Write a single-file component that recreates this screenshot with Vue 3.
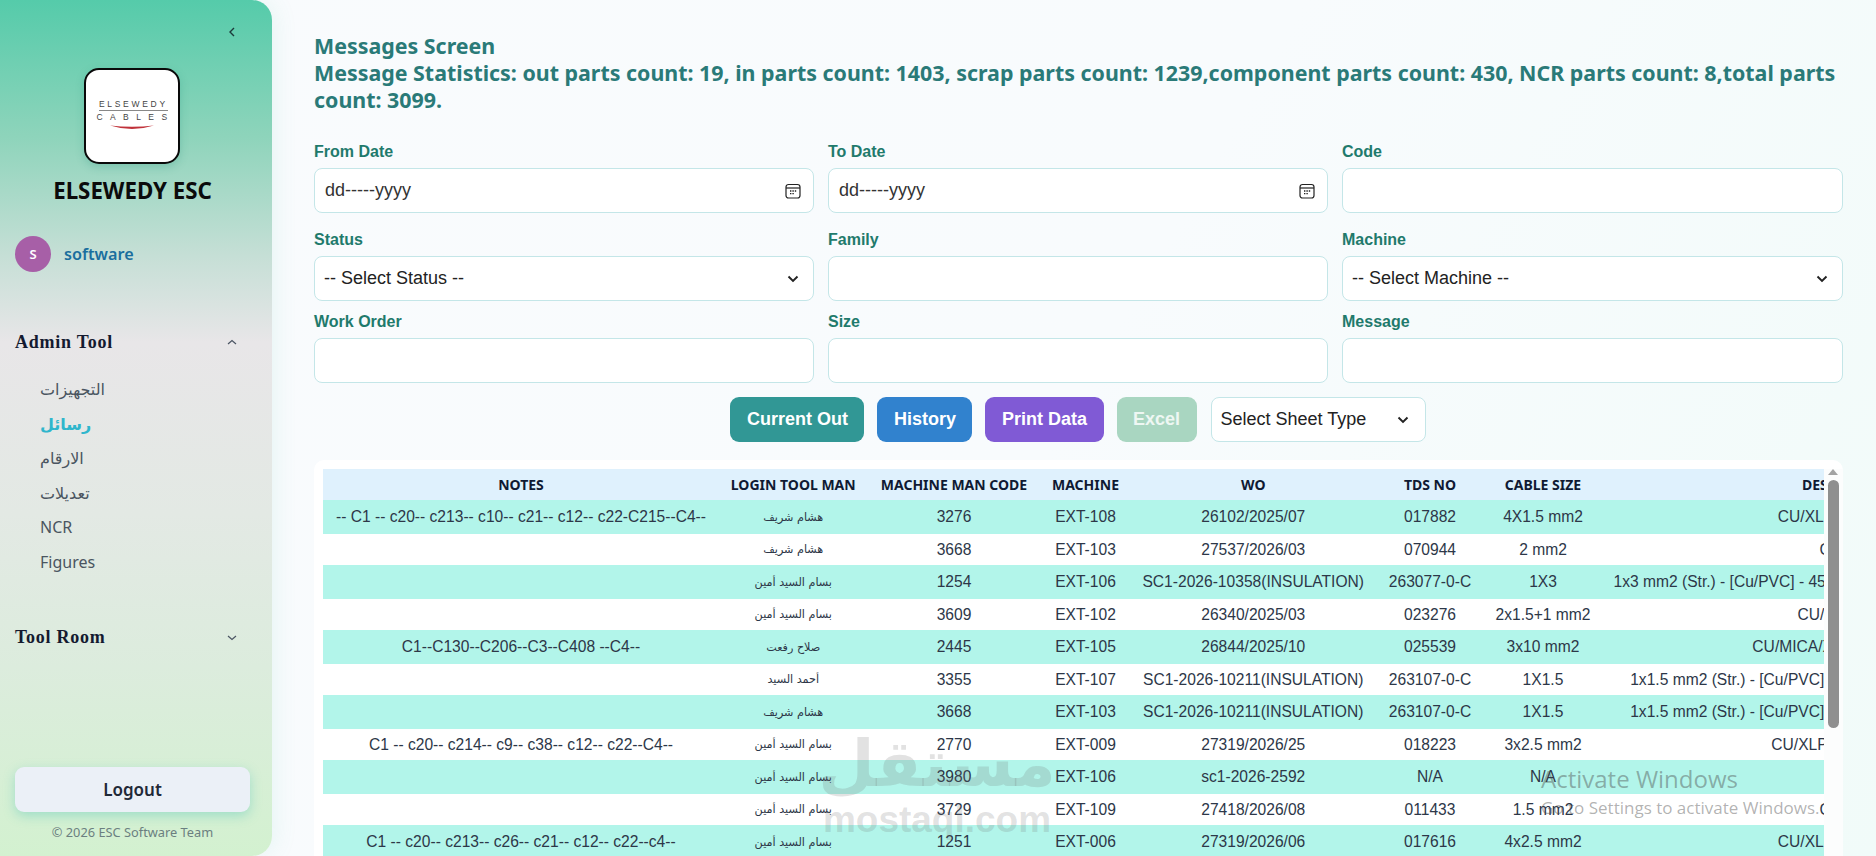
<script setup>
const firstRow = [
  { label: 'From Date', type: 'date' },
  { label: 'To Date', type: 'date' },
  { label: 'Code', type: 'text' },
]
const otherRows = [
  { label: 'Status', type: 'select', value: '-- Select Status --' },
  { label: 'Family', type: 'text' },
  { label: 'Machine', type: 'select', value: '-- Select Machine --' },
  { label: 'Work Order', type: 'text' },
  { label: 'Size', type: 'text' },
  { label: 'Message', type: 'text' },
]
const menu = ['التجهيزات', 'رسائل', 'الارقام', 'تعديلات', 'NCR', 'Figures']
const heads = ['Notes', 'Login Tool Man', 'Machine Man Code', 'Machine', 'WO', 'TDS No', 'Cable Size', 'Description']
const rows = [
  ['-- C1 -- c20-- c213-- c10-- c21-- c12-- c22-C215--C4--', 'هشام شريف', '3276', 'EXT-108', '26102/2025/07', '017882', '4X1.5 mm2', 'CU/XLPE/SWA/PVC'],
  ['', 'هشام شريف', '3668', 'EXT-103', '27537/2026/03', '070944', '2 mm2', 'CU/PVC'],
  ['', 'بسام السيد أمين', '1254', 'EXT-106', 'SC1-2026-10358(INSULATION)', '263077-0-C', '1X3', '1x3 mm2 (Str.) - [Cu/PVC] - 450/750 V - H07V-R - Building Wire - Red'],
  ['', 'بسام السيد أمين', '3609', 'EXT-102', '26340/2025/03', '023276', '2x1.5+1 mm2', 'CU/XLPE/PVC'],
  ['C1--C130--C206--C3--C408 --C4--', 'صلاح رفعت', '2445', 'EXT-105', '26844/2025/10', '025539', '3x10 mm2', 'CU/MICA/XLPE/LSZH 0.6/1'],
  ['', 'أحمد السيد', '3355', 'EXT-107', 'SC1-2026-10211(INSULATION)', '263107-0-C', '1X1.5', '1x1.5 mm2 (Str.) - [Cu/PVC] - 450/750 V - H07V-R - Panel Wire'],
  ['', 'هشام شريف', '3668', 'EXT-103', 'SC1-2026-10211(INSULATION)', '263107-0-C', '1X1.5', '1x1.5 mm2 (Str.) - [Cu/PVC] - 450/750 V - H07V-R - Panel Wire'],
  ['C1 -- c20-- c214-- c9-- c38-- c12-- c22--C4--', 'بسام السيد أمين', '2770', 'EXT-009', '27319/2026/25', '018223', '3x2.5 mm2', 'CU/XLPE/SWA/PVC 1'],
  ['', 'بسام السيد أمين', '3980', 'EXT-106', 'sc1-2026-2592', 'N/A', 'N/A', ''],
  ['', 'بسام السيد أمين', '3729', 'EXT-109', '27418/2026/08', '011433', '1.5 mm2', 'CU/PVC'],
  ['C1 -- c20-- c213-- c26-- c21-- c12-- c22--c4--', 'بسام السيد أمين', '1251', 'EXT-006', '27319/2026/06', '017616', '4x2.5 mm2', 'CU/XLPE/SWA/PVC'],
]
const widths = [396, 148.5, 173, 90, 245.5, 108, 118, 494]
</script>

<template>
  <div class="app">
    <aside class="sidebar">
      <div class="collapse-row">
        <svg width="10" height="12" viewBox="0 0 10 12"><path d="M7 2 L3 6 L7 10" fill="none" stroke="#1c3a3a" stroke-width="1.4" /></svg>
      </div>
      <div class="logo">
        <span class="logo-top">ELSEWEDY</span>
        <span class="logo-bottom">CABLES</span>
        <svg class="smile" width="44" height="6" viewBox="0 0 44 6"><path d="M0 0.5 Q22 3 44 0.5 Q22 7.5 0 0.5 Z" fill="#c0323a" /></svg>
      </div>
      <div class="brand">ELSEWEDY ESC</div>
      <div class="user">
        <span class="avatar">S</span>
        <span class="username">software</span>
      </div>
      <div class="group admin">
        <span>Admin Tool</span>
        <svg width="12" height="8" viewBox="0 0 12 8"><path d="M2 6 L6 2.5 L10 6" fill="none" stroke="#4b5563" stroke-width="1.2" /></svg>
      </div>
      <ul class="menu">
        <li v-for="(item, i) in menu" :key="item" :class="{ active: i === 1 }">{{ item }}</li>
      </ul>
      <div class="group room">
        <span>Tool Room</span>
        <svg width="12" height="8" viewBox="0 0 12 8"><path d="M2 2 L6 5.5 L10 2" fill="none" stroke="#4b5563" stroke-width="1.2" /></svg>
      </div>
      <button class="logout">Logout</button>
      <div class="copy">© 2026 ESC Software Team</div>
    </aside>

    <main class="main">
      <h1 class="title">
        Messages Screen<br />
        Message Statistics: out parts count: 19, in parts count: 1403, scrap parts count: 1239,component parts count: 430, NCR parts count: 8,total parts count: 3099.
      </h1>

      <section class="form first">
        <div v-for="f in firstRow" :key="f.label" class="field">
          <label>{{ f.label }}</label>
          <div class="control">
            <template v-if="f.type === 'date'">
              <span class="date-text">dd-----yyyy</span>
              <svg width="16" height="16" viewBox="0 0 16 16">
                <rect x="1" y="1.5" width="14" height="13.5" rx="2.5" fill="none" stroke="#222" stroke-width="1.2" />
                <path d="M1 5 H15" stroke="#222" stroke-width="1.2" />
                <path d="M5 8 H6.4 M7.4 8 H8.8 M9.8 8 H11.2 M5 10.6 H6.4 M7.4 10.6 H8.8" stroke="#222" stroke-width="1.3" />
              </svg>
            </template>
          </div>
        </div>
      </section>
      <section class="form">
        <div v-for="f in otherRows" :key="f.label" class="field">
          <label>{{ f.label }}</label>
          <div class="control">
            <template v-if="f.type === 'select'">
              <span class="select-text">{{ f.value }}</span>
              <svg class="chev" width="12" height="8" viewBox="0 0 12 8"><path d="M1.5 1.5 L6 6 L10.5 1.5" fill="none" stroke="#222" stroke-width="1.9" /></svg>
            </template>
          </div>
        </div>
      </section>

      <div class="actions">
        <button class="btn teal">Current Out</button>
        <button class="btn blue">History</button>
        <button class="btn purple">Print Data</button>
        <button class="btn excel">Excel</button>
        <div class="sheet">
          <span>Select Sheet Type</span>
          <svg width="12" height="8" viewBox="0 0 12 8"><path d="M1.5 1.5 L6 6 L10.5 1.5" fill="none" stroke="#222" stroke-width="1.9" /></svg>
        </div>
      </div>

      <section class="card">
        <div class="table-wrap">
          <table>
            <colgroup>
              <col v-for="(w, i) in widths" :key="i" :style="{ width: w + 'px' }" />
            </colgroup>
            <thead>
              <tr><th v-for="h in heads" :key="h">{{ h }}</th></tr>
            </thead>
            <tbody>
              <tr v-for="(r, i) in rows" :key="i">
                <td v-for="(c, j) in r" :key="j" :class="{ ar: j === 1 }">{{ c }}</td>
              </tr>
            </tbody>
          </table>
        </div>
        <div class="scrollbar">
          <svg width="12" height="8" viewBox="0 0 12 8"><path d="M6 1 L11 7 H1 Z" fill="#a3a3a3" /></svg>
          <div class="thumb"></div>
        </div>
      </section>
    </main>

    <div class="wm-mostaql">
      <span class="wm-ar">مستقل</span>
      <span class="wm-en">mostaql.com</span>
    </div>
    <div class="wm-windows">
      <div class="wm-win-1">Activate Windows</div>
      <div class="wm-win-2">Go to Settings to activate Windows.</div>
    </div>
  </div>
</template>

<style>
html, body { margin: 0; overflow: hidden; }
</style>

<style scoped>
.app {
  position: relative;
  display: flex;
  width: 1876px;
  height: 856px;
  overflow: hidden;
  background: linear-gradient(120deg, #f9fbfd 0%, #f8fbfd 55%, #f1fbf9 100%);
  font-family: "Liberation Sans", Arial, sans-serif;
}
.sidebar {
  flex: 0 0 272px;
  box-sizing: border-box;
  height: 856px;
  display: flex;
  flex-direction: column;
  padding: 22px 22px 15px 15px;
  border-radius: 0 20px 20px 0;
  background: linear-gradient(180deg, #55cbaa 0%, #8ed4bb 16%, #c6dfd6 30%, #e8e6e8 40%, #e3e9e4 60%, #dcecdd 78%, #d3f1d0 100%);
  box-shadow: 4px 0 22px rgba(80, 200, 170, .1);
  font-family: "Noto Sans", "DejaVu Sans", sans-serif;
}
.collapse-row {
  display: flex;
  justify-content: flex-end;
  align-items: center;
  height: 20px;
  padding-right: 13px;
}
.logo {
  box-sizing: border-box;
  width: 96px;
  height: 96px;
  margin: 26px 0 0 69px;
  border: 2px solid #0a0a0a;
  border-radius: 15px;
  background: #fff;
  display: flex;
  flex-direction: column;
  align-items: center;
  justify-content: center;
  box-shadow: 0 3px 8px rgba(30, 140, 120, .25);
  padding-bottom: 3px;
  color: #444;
  font-family: "Liberation Sans", sans-serif;
  font-size: 8.5px;
  line-height: 11px;
}
.logo-top {
  letter-spacing: 2.7px;
  margin-right: -2.7px;
  border-bottom: 1px solid #888;
  margin-bottom: 1px;
}
.logo-bottom { letter-spacing: 7.4px; margin-right: -7px; }
.smile { margin-top: 2px; }
.brand {
  margin-top: 13px;
  height: 28px;
  line-height: 28px;
  text-align: center;
  font-size: 22.3px;
  font-weight: 700;
  color: #0b0b0b;
}
.user {
  display: flex;
  align-items: center;
  margin-top: 31px;
  height: 36px;
}
.avatar {
  width: 36px;
  height: 36px;
  border-radius: 50%;
  background: #a75fa7;
  color: #fff;
  display: flex;
  align-items: center;
  justify-content: center;
  font-size: 13px;
  font-weight: 600;
}
.username {
  margin-left: 13px;
  font-size: 16.2px;
  font-weight: 600;
  color: #1a6e9e;
}
.group {
  display: flex;
  align-items: center;
  justify-content: space-between;
  height: 24px;
  padding-right: 12px;
  font-family: "Liberation Serif", serif;
  font-weight: 700;
  font-size: 18px;
  letter-spacing: .75px;
  color: #141a30;
}
.admin { margin-top: 58px; }
.room { margin-top: 46px; }
.menu {
  list-style: none;
  margin: 18px 0 0;
  padding: 0 0 0 25px;
}
.menu li {
  height: 34.6px;
  line-height: 34.6px;
  font-size: 16px;
  color: #4a5560;
  font-family: "Noto Sans", "DejaVu Sans", sans-serif;
}
.menu li.active { color: #2fb6cc; font-weight: 700; }
.logout {
  margin-top: auto;
  height: 45px;
  border: 0;
  border-radius: 9px;
  background: #ebf0f7;
  box-shadow: 0 4px 12px rgba(60, 190, 180, .35);
  font-family: "Noto Sans", sans-serif;
  font-size: 17px;
  font-weight: 600;
  color: #1f2937;
}
.copy {
  margin-top: 11px;
  height: 18px;
  line-height: 18px;
  text-align: center;
  font-size: 12.8px;
  color: #6b7f80;
}
.main {
  flex: 1;
  min-width: 0;
  box-sizing: border-box;
  padding: 32px 33px 0 42px;
}
.title {
  margin: 0 0 31px;
  font-family: "Noto Sans", sans-serif;
  font-size: 21.4px;
  line-height: 27px;
  font-weight: 700;
  color: #2a7a78;
}
.form {
  display: grid;
  grid-template-columns: 500px 500px 501px;
  column-gap: 14px;
  row-gap: 13px;
}
.first { margin-bottom: 19px; }
.field label {
  display: block;
  height: 16px;
  line-height: 16px;
  margin-bottom: 8px;
  font-size: 16px;
  font-weight: 700;
  color: #1f7a6c;
}
.control {
  box-sizing: border-box;
  height: 45px;
  display: flex;
  align-items: center;
  justify-content: space-between;
  padding: 0 12px 0 10px;
  background: #fff;
  border: 1px solid #c4e6e8;
  border-radius: 8px;
  font-size: 18px;
  color: #222;
}
.date-text { color: #333; font-size: 18px; }
.select-text { margin-left: -1px; }
.chev { margin-right: 2px; }
.actions {
  display: flex;
  justify-content: center;
  gap: 13px;
  margin-top: 14px;
  padding-right: 1px;
}
.btn {
  height: 45px;
  padding: 0 16.5px;
  border: 0;
  border-radius: 9px;
  color: #fff;
  font-family: "Liberation Sans", sans-serif;
  font-size: 18px;
  font-weight: 700;
}
.teal { background: #319795; }
.blue { background: #3182ce; }
.purple { background: #805ad5; }
.excel { background: #a9d6c1; color: #eef7f3; }
.sheet {
  box-sizing: border-box;
  width: 215px;
  height: 45px;
  display: flex;
  align-items: center;
  justify-content: space-between;
  padding: 0 16px 0 9px;
  margin-left: 1px;
  background: #fff;
  border: 1px solid #c4e6e8;
  border-radius: 8px;
  font-size: 18px;
  color: #222;
}
.card {
  display: flex;
  margin-top: 18px;
  width: 1529px;
  height: 420px;
  box-sizing: border-box;
  padding: 9px 0 0 9px;
  background: #fff;
  border-radius: 10px 10px 0 0;
}
.table-wrap {
  flex: 1;
  min-width: 0;
  overflow: hidden;
}
table {
  width: 1773px;
  table-layout: fixed;
  border-collapse: collapse;
}
th {
  height: 31px;
  padding: 0 11.5px;
  background: #dff1fd;
  font-family: "Noto Sans", sans-serif;
  font-size: 14px;
  font-weight: 700;
  text-transform: uppercase;
  color: #0f1a33;
  text-align: center;
  white-space: nowrap;
}
td {
  padding: 0 11.5px;
  height: 31px;
  text-align: center;
  font-size: 15.6px;
  color: #2d3748;
  white-space: nowrap;
}
td.ar { font-family: "DejaVu Sans", sans-serif; font-size: 11.2px; }
tbody tr:nth-child(odd) td { background: #b2f5ea; height: 34px; }
.scrollbar {
  flex: 0 0 19px;
  display: flex;
  flex-direction: column;
  align-items: center;
  background: #fcfdfd;
}
.scrollbar svg { margin-top: -1px; margin-left: -1px; }
.thumb {
  width: 11px;
  height: 248px;
  margin-top: 4px;
  margin-left: -1px;
  border-radius: 6px;
  background: #8f8f8f;
}
.wm-mostaql {
  position: absolute;
  left: 825px;
  top: 726px;
  width: 224px;
  display: flex;
  flex-direction: column;
  align-items: center;
  color: rgba(110, 110, 110, .2);
  pointer-events: none;
}
.wm-ar {
  font-family: "DejaVu Sans", sans-serif;
  font-weight: 700;
  font-size: 65px;
  line-height: 76px;
}
.wm-en {
  font-family: "Liberation Sans", sans-serif;
  font-weight: 700;
  font-size: 37px;
  line-height: 36px;
}
.wm-windows {
  position: absolute;
  left: 1541px;
  top: 764px;
  color: rgba(70, 70, 70, .42);
  font-family: "Open Sans", sans-serif;
  white-space: nowrap;
  pointer-events: none;
}
.wm-win-1 { font-size: 24px; line-height: 30px; }
.wm-win-2 { font-size: 17px; line-height: 22px; margin-top: 3px; }
</style>
